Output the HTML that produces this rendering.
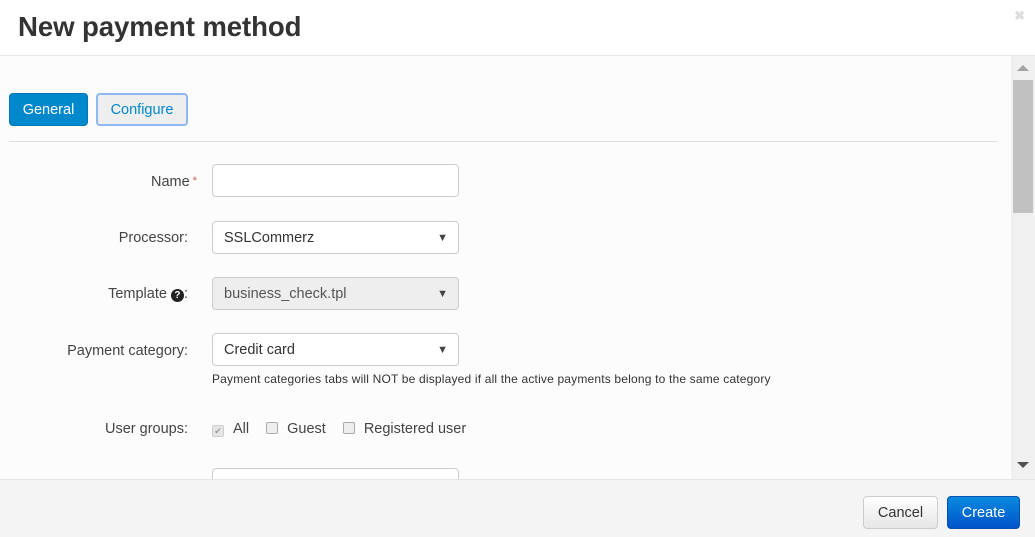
<!DOCTYPE html>
<html><head><style>
*{box-sizing:border-box;margin:0;padding:0}
body{width:1035px;height:537px;overflow:hidden;background:#fff;font-family:"Liberation Sans",Arial,sans-serif;color:#333;position:relative}
.h{position:absolute;left:0;top:0;width:1035px;height:56px;border-bottom:1px solid #e5e5e5;background:#fff}
.h h1{position:absolute;left:18px;top:11px;font-size:27.6px;font-weight:bold;color:#333;letter-spacing:-0.1px}
.x{position:absolute;right:10px;top:8px;color:#ddd;font-size:13px;font-weight:bold}
.b{position:absolute;left:0;top:56px;width:1011px;height:423px;background:#fcfcfc;overflow:hidden}
.sb{position:absolute;left:1011px;top:56px;width:24px;height:423px;background:#f0f0f0}
.th{position:absolute;left:2px;top:24px;width:20px;height:133px;background:#c1c1c1}
.tab{position:absolute;top:37px;height:33px;font-size:14.5px;text-align:center;border-radius:4px}
.hr{position:absolute;left:9px;top:85px;width:988px;height:1px;background:#ddd}
.lb{position:absolute;right:823px;font-size:14.5px;color:#444;text-align:right;white-space:nowrap}
.in{position:absolute;left:212px;width:247px;height:33px;border:1px solid #ccc;border-radius:4px;background:#fff;font-size:14.5px;line-height:32px;padding-left:11px;color:#333}
.in .a{position:absolute;right:10px;top:0;font-size:11px;color:#444}
.cb{display:inline-block;width:12px;height:12px;border:1px solid #aaa;border-radius:2px;background:#eee;vertical-align:-1px;margin-right:9px}
.f{position:absolute;left:0;top:479px;width:1035px;height:58px;background:#f4f4f4;border-top:1px solid #e5e5e5}
.btn{position:absolute;top:16px;height:33px;border-radius:4px;font-size:14.5px;line-height:32px;text-align:center}
</style></head><body>
<div class="h"><h1>New payment method</h1><div class="x">✖</div></div>
<div class="b">
<div class="tab" style="left:9px;width:79px;background:#0088cc;color:#fff;border:1px solid #0077b5;line-height:33px">General</div>
<div class="tab" style="left:96px;width:92px;background:#eee;color:#0088cc;border:2px solid #8fb8f2;line-height:31px">Configure</div>
<div class="hr"></div>
<div class="lb" style="top:118px;right:814px">Name<span style="color:#d9534f;font-size:11px;vertical-align:2px"> *</span></div>
<div class="in" style="top:108px"></div>
<div class="lb" style="top:174px">Processor:</div>
<div class="in" style="top:165px">SSLCommerz<span class="a">▼</span></div>
<div class="lb" style="top:230px">Template <span style="display:inline-block;width:13px;height:13px;border-radius:50%;background:#222;color:#fff;font-size:10px;line-height:13px;text-align:center;font-weight:bold;vertical-align:0px">?</span>:</div>
<div class="in" style="top:221px;background:#eee;color:#555">business_check.tpl<span class="a">▼</span></div>
<div class="lb" style="top:287px">Payment category:</div>
<div class="in" style="top:277px">Credit card<span class="a">▼</span></div>
<div style="position:absolute;left:212px;top:316px;font-size:12px;letter-spacing:0.18px;color:#333;white-space:nowrap">Payment categories tabs will NOT be displayed if all the active payments belong to the same category</div>
<div class="lb" style="top:365px">User groups:</div>
<div style="position:absolute;left:212px;top:365px;font-size:14.5px;color:#444;white-space:nowrap"><span class="cb" style="color:#999;font-size:9px;line-height:10px;text-align:center;background:#e5e5e5;border-color:#ccc">✔</span>All<span style="display:inline-block;width:17px"></span><span class="cb"></span>Guest<span style="display:inline-block;width:17px"></span><span class="cb"></span>Registered user</div>
<div class="in" style="top:412px"></div>
</div>
<div class="sb"><div style="position:absolute;left:6px;top:9px;border-left:6px solid transparent;border-right:6px solid transparent;border-bottom:6px solid #a3a3a3"></div><div class="th"></div><div style="position:absolute;left:6px;top:406px;border-left:6px solid transparent;border-right:6px solid transparent;border-top:6px solid #505050"></div></div>
<div class="f">
<div class="btn" style="left:863px;width:75px;background:linear-gradient(#fff,#e6e6e6);border:1px solid #ccc;color:#333">Cancel</div>
<div class="btn" style="left:947px;width:73px;background:linear-gradient(#0a8ae0,#0053c8);border:1px solid #0050b0;color:#fff">Create</div>
</div>
</body></html>
